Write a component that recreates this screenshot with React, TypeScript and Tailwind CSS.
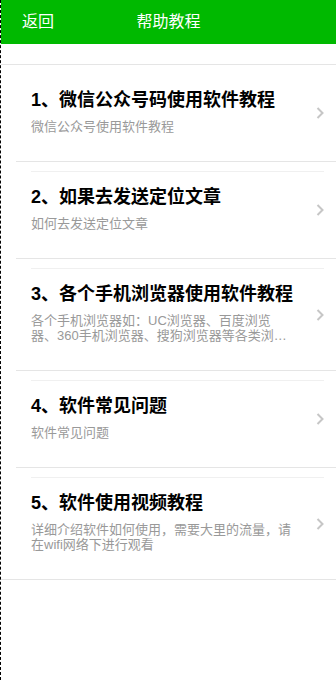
import React from 'react';

interface Tutorial {
  title: string;
  desc: string;
}

const tutorials: Tutorial[] = [
  { title: '1、微信公众号码使用软件教程', desc: '微信公众号使用软件教程' },
  { title: '2、如果去发送定位文章', desc: '如何去发送定位文章' },
  {
    title: '3、各个手机浏览器使用软件教程',
    desc: '各个手机浏览器如：UC浏览器、百度浏览器、360手机浏览器、搜狗浏览器等各类浏览器使用软件的方法和注意事项',
  },
  { title: '4、软件常见问题', desc: '软件常见问题' },
  {
    title: '5、软件使用视频教程',
    desc: '详细介绍软件如何使用，需要大里的流量，请在wifi网络下进行观看',
  },
];

function Chevron() {
  return (
    <svg width="8" height="12" viewBox="0 0 8 12" className="block">
      <polyline
        points="1.5,1 6.5,6 1.5,11"
        fill="none"
        stroke="#c6c6c6"
        strokeWidth="2"
      />
    </svg>
  );
}

export default function App() {
  return (
    <div
      className="min-h-screen w-full bg-white border-l border-dashed border-black"
      style={{ fontFamily: '"Liberation Sans", "Noto Sans CJK SC", sans-serif' }}
    >
      {/* Header */}
      <div className="h-[44px] bg-[#00b900] grid grid-cols-[1fr_auto_1fr] items-center text-white text-[16px]">
        <button className="justify-self-start pl-[21px] text-white">返回</button>
        <h1 className="font-normal">帮助教程</h1>
        <div />
      </div>

      {/* List */}
      <ul className="mt-5 border-y border-[#e5e5e5]">
        {tutorials.map((t, i) => (
          <li
            key={t.title}
            className={`relative ml-[15px] pt-[9px] cursor-pointer ${
              i > 0 ? 'border-t border-[#e5e5e5]' : ''
            }`}
          >
            <div
              className={`ml-[15px] mr-3 border-t pt-[13px] pb-[27px] ${
                i > 0 ? 'border-[#f0f0f0]' : 'border-transparent'
              }`}
            >
              <h3 className="text-[18px] leading-[24px] font-bold text-black">{t.title}</h3>
              <p className="mt-[7px] w-[260px] text-[13px] leading-[15px] text-[#999999] line-clamp-2">
                {t.desc}
              </p>
            </div>
            <div className="absolute right-3 top-1/2 -translate-y-1/2">
              <Chevron />
            </div>
          </li>
        ))}
      </ul>
    </div>
  );
}
